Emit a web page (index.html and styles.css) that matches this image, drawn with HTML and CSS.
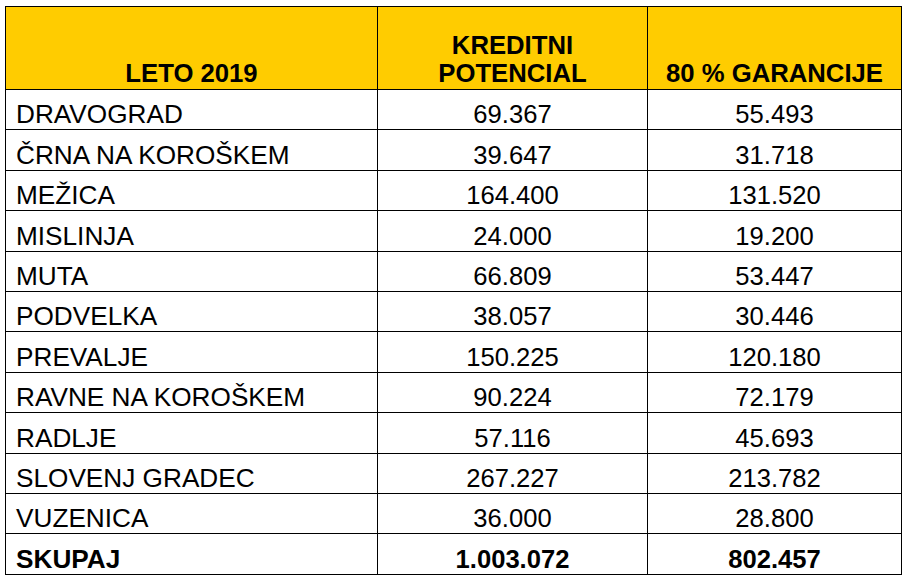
FILE: index.html
```html
<!DOCTYPE html>
<html lang="sl">
<head>
<meta charset="utf-8">
<title>Leto 2019</title>
<link rel="stylesheet" href="styles.css">
</head>
<body>
<div class="grid" role="table">
  <div class="cell head" role="columnheader">LETO 2019</div>
  <div class="cell head" role="columnheader">KREDITNI<br>POTENCIAL</div>
  <div class="cell head" role="columnheader">80 % GARANCIJE</div>

  <div class="cell name">DRAVOGRAD</div><div class="cell num">69.367</div><div class="cell num">55.493</div>
  <div class="cell name">ČRNA NA KOROŠKEM</div><div class="cell num">39.647</div><div class="cell num">31.718</div>
  <div class="cell name">MEŽICA</div><div class="cell num">164.400</div><div class="cell num">131.520</div>
  <div class="cell name">MISLINJA</div><div class="cell num">24.000</div><div class="cell num">19.200</div>
  <div class="cell name">MUTA</div><div class="cell num">66.809</div><div class="cell num">53.447</div>
  <div class="cell name">PODVELKA</div><div class="cell num">38.057</div><div class="cell num">30.446</div>
  <div class="cell name">PREVALJE</div><div class="cell num">150.225</div><div class="cell num">120.180</div>
  <div class="cell name">RAVNE NA KOROŠKEM</div><div class="cell num">90.224</div><div class="cell num">72.179</div>
  <div class="cell name">RADLJE</div><div class="cell num">57.116</div><div class="cell num">45.693</div>
  <div class="cell name">SLOVENJ GRADEC</div><div class="cell num">267.227</div><div class="cell num">213.782</div>
  <div class="cell name">VUZENICA</div><div class="cell num">36.000</div><div class="cell num">28.800</div>
  <div class="cell name total">SKUPAJ</div><div class="cell num total">1.003.072</div><div class="cell num total">802.457</div>
</div>
</body>
</html>
```
FILE: styles.css
```css
html, body {
  margin: 0;
  padding: 0;
  background: #ffffff;
}
body {
  font-family: "Liberation Sans", Arial, sans-serif;
  color: #000000;
}
.grid {
  display: grid;
  grid-template-columns: 371px 269px 253px;
  grid-template-rows: 82px repeat(12, 39.42px);
  gap: 1px;
  padding: 1px;
  background: #000000;
  width: max-content;
  margin: 6px 0 0 5px;
}
.cell {
  background: #ffffff;
  display: flex;
  flex-direction: column;
  justify-content: flex-end;
  align-items: center;
  text-align: center;
  font-size: 25.6px;
  line-height: 28.7px;
  white-space: nowrap;
  padding-bottom: 0.4px;
}
.head {
  background: #ffcc00;
  font-weight: bold;
  font-size: 25.7px;
  padding-bottom: 0.9px;
}
.name {
  align-items: flex-start;
  text-align: left;
  padding-left: 10px;
  font-size: 26.2px;
}
.total {
  font-weight: bold;
}
```
